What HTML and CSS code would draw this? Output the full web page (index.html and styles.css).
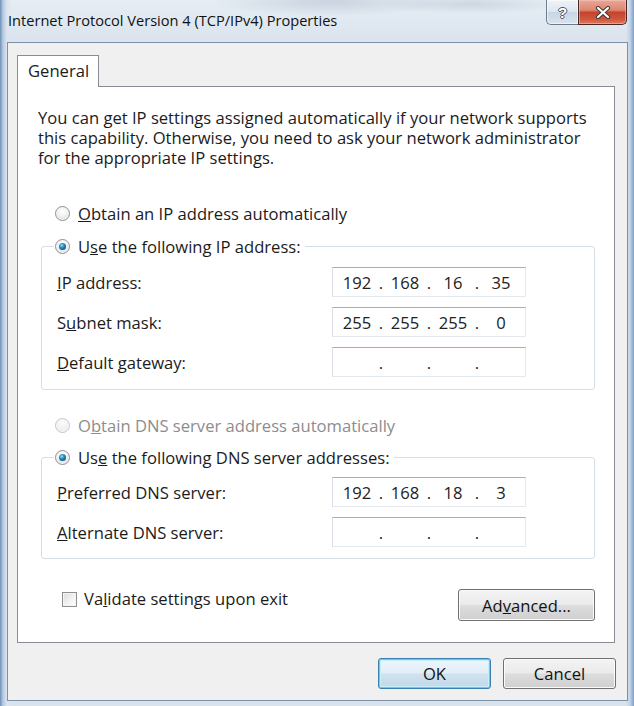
FILE: index.html
```html
<!DOCTYPE html>
<html lang="en">
<head>
<meta charset="utf-8">
<title>Internet Protocol Version 4 (TCP/IPv4) Properties</title>
<link rel="stylesheet" href="styles.css">
</head>
<body>
<div class="window">
  <header class="titlebar">
    <span class="title">Internet Protocol Version 4 (TCP/IPv4) Properties</span>
    <div class="caption">
      <div class="cap-btn help"><span class="help-glyph">?</span></div>
      <div class="cap-btn close">
        <svg width="16" height="13" viewBox="0 0 16 13">
          <path d="M3 2 L13 11 M13 2 L3 11" stroke="#3a3a3a" stroke-width="4.2" stroke-linecap="round" fill="none"/>
          <path d="M3 2 L13 11 M13 2 L3 11" stroke="#ffffff" stroke-width="2.2" stroke-linecap="round" fill="none"/>
        </svg>
      </div>
    </div>
  </header>
  <div class="client">
    <div class="tabstrip"><div class="tab">General</div></div>
    <div class="panel">
      <p class="desc"><span class="line">You can get IP settings assigned automatically if your network supports</span><span class="line">this capability. Otherwise, you need to ask your network administrator</span><span class="line">for the appropriate IP settings.</span></p>

      <div class="option option-top"><span class="radio"></span><span><u>O</u>btain an IP address automatically</span></div>

      <fieldset class="group">
        <legend><span class="option"><span class="radio checked"></span><span>U<u>s</u>e the following IP address:</span></span></legend>
        <div class="fields">
          <span class="label"><u>I</u>P address:</span>
          <div class="ipbox"><span class="seg">192</span><span class="dot">.</span><span class="seg">168</span><span class="dot">.</span><span class="seg">16</span><span class="dot">.</span><span class="seg">35</span></div>
          <span class="label">S<u>u</u>bnet mask:</span>
          <div class="ipbox"><span class="seg">255</span><span class="dot">.</span><span class="seg">255</span><span class="dot">.</span><span class="seg">255</span><span class="dot">.</span><span class="seg">0</span></div>
          <span class="label"><u>D</u>efault gateway:</span>
          <div class="ipbox"><span class="seg"></span><span class="dot">.</span><span class="seg"></span><span class="dot">.</span><span class="seg"></span><span class="dot">.</span><span class="seg"></span></div>
        </div>
      </fieldset>

      <div class="option option-dns disabled"><span class="radio"></span><span>O<u>b</u>tain DNS server address automatically</span></div>

      <fieldset class="group group-dns">
        <legend><span class="option"><span class="radio checked"></span><span>Us<u>e</u> the following DNS server addresses:</span></span></legend>
        <div class="fields">
          <span class="label"><u>P</u>referred DNS server:</span>
          <div class="ipbox"><span class="seg">192</span><span class="dot">.</span><span class="seg">168</span><span class="dot">.</span><span class="seg">18</span><span class="dot">.</span><span class="seg">3</span></div>
          <span class="label"><u>A</u>lternate DNS server:</span>
          <div class="ipbox"><span class="seg"></span><span class="dot">.</span><span class="seg"></span><span class="dot">.</span><span class="seg"></span><span class="dot">.</span><span class="seg"></span></div>
        </div>
      </fieldset>

      <div class="bottom-row">
        <div class="check"><span class="checkbox"></span><span>Va<u>l</u>idate settings upon exit</span></div>
        <button class="btn advanced">Ad<u>v</u>anced...</button>
      </div>
    </div>
    <div class="footer">
      <button class="btn default">OK</button>
      <button class="btn">Cancel</button>
    </div>
  </div>
</div>
</body>
</html>
```

FILE: styles.css
```css
* { box-sizing: border-box; }

html, body {
  margin: 0;
  padding: 0;
}

body {
  width: 634px;
  height: 706px;
  overflow: hidden;
  font-family: "Open Sans", "Noto Sans", sans-serif;
  font-size: 16.6px;
  color: #1b1b1b;
  background:
    linear-gradient(to right, #6d8fb8 0px, #b7cbe0 3px, #dbe5ef 7px, rgba(219,229,239,0) 12px),
    linear-gradient(to left, #7f9fc6 0px, #c1d3e6 4px, rgba(215,226,238,0) 8px),
    linear-gradient(to bottom, #e6edf4 0px, #dbe4ee 40px, #d8e3ee 100%);
}

.window {
  width: 634px;
  height: 706px;
}

/* ---------- title bar ---------- */
.titlebar {
  height: 42px;
  display: flex;
  align-items: flex-start;
  background:
    radial-gradient(ellipse 120px 14px at 330px 2px, rgba(150,165,185,0.35), rgba(150,165,185,0)),
    radial-gradient(ellipse 90px 10px at 470px 4px, rgba(150,165,185,0.3), rgba(150,165,185,0));
}

.title {
  padding-left: 8px;
  font-size: 14.6px;
  line-height: 40px;
  color: #111;
  white-space: nowrap;
}

.caption {
  margin-left: auto;
  margin-right: 7px;
  display: flex;
}

.cap-btn {
  height: 25px;
  display: flex;
  align-items: center;
  justify-content: center;
}

.help {
  width: 32px;
  border: 1px solid #6c7c8e;
  border-top: 0;
  border-right: 0;
  border-radius: 0 0 0 5px;
  background: linear-gradient(to bottom, #eef3f8 0%, #dde6ef 48%, #c9d6e4 52%, #d9e3ee 100%);
  box-shadow: inset 0 0 0 1px rgba(255,255,255,0.55);
}

.help-glyph {
  font-family: "Liberation Sans", sans-serif;
  font-weight: bold;
  font-size: 15px;
  line-height: 1;
  color: #fff;
  text-shadow: -1px 0 #555, 1px 0 #555, 0 -1px #555, 0 1px #555;
}

.close {
  width: 49px;
  border: 1px solid #4b2723;
  border-top: 0;
  border-radius: 0 0 5px 0;
  background: linear-gradient(to bottom, #e9a898 0%, #dc8670 42%, #c6432c 52%, #cf563f 80%, #e07a5d 100%);
  box-shadow: inset 0 0 0 1px rgba(255,210,200,0.45);
}

/* ---------- client area ---------- */
.client {
  margin: 0 6px 0 7px;
  height: 659px;
  border: 1px solid #7f90a4;
  background: #f0f0f0;
  padding: 12px 0 0 9px;
}

.tabstrip {
  display: flex;
  height: 31px;
}

.tab {
  position: relative;
  z-index: 1;
  width: 82px;
  height: 32px;
  border: 1px solid #898c95;
  border-bottom: 0;
  background: #fff;
  padding-left: 10px;
  line-height: 29px;
  color: #1b1b1b;
}

.panel {
  width: 598px;
  height: 557px;
  border: 1px solid #898c95;
  background: #fff;
  padding: 21px 19px 0 20px;
}

.desc {
  margin: 0;
  white-space: nowrap;
}

.desc .line {
  display: block;
  height: 20px;
  line-height: 20px;
}

.option {
  display: flex;
  align-items: center;
  gap: 8px;
  height: 24px;
  white-space: nowrap;
}

.option-top {
  margin: 33px 0 0 17px;
}

.option-dns {
  margin: 23px 0 0 17px;
}

.disabled {
  color: #8d8d8d;
}

.radio {
  flex: none;
  width: 15px;
  height: 15px;
  border-radius: 50%;
  border: 1px solid #8b8f94;
  background: radial-gradient(circle at 50% 35%, #ffffff 0%, #f1f1f1 45%, #d4d4d4 100%);
  box-shadow: inset 0 0 0 1px #f8f8f8;
  position: relative;
}

.disabled .radio {
  border-color: #c4c6c9;
  background: radial-gradient(circle at 50% 35%, #fbfbfb 0%, #f0f0f0 60%, #e4e4e4 100%);
}

.radio.checked::after {
  content: "";
  position: absolute;
  left: 3px;
  top: 3px;
  width: 7px;
  height: 7px;
  border-radius: 50%;
  background: radial-gradient(circle at 40% 35%, #9fe0f5 0%, #2b8fc3 35%, #0d4f7a 80%, #0a3a5c 100%);
}

.group {
  margin: 9px 0 0 3px;
  padding: 0 0 12px 0;
  border: 1px solid #d5dfe5;
  border-radius: 3px;
  min-width: 0;
}

.group legend {
  margin-left: 12px;
  padding: 0 4px 0 1px;
}

.group legend .option {
  color: #1b1b1b;
}

.group-dns {
  margin-top: 8px;
  padding-bottom: 11px;
}

.fields {
  display: grid;
  grid-template-columns: 275px 194px;
  grid-auto-rows: 30px;
  row-gap: 10px;
  align-items: center;
  margin-top: 9px;
  padding-left: 15px;
}

.group-dns .fields {
  margin-top: 8px;
}

.label {
  white-space: nowrap;
}

.ipbox {
  height: 30px;
  display: flex;
  align-items: center;
  padding-left: 3px;
  border: 1px solid #dbdfe6;
  border-top-color: #abadb3;
  border-right-color: #e3e9ef;
  border-bottom-color: #e3e9ef;
  background: #fff;
  color: #222;
}

.seg {
  width: 42px;
  text-align: center;
}

.dot {
  width: 6px;
  text-align: center;
}

.bottom-row {
  display: flex;
  justify-content: space-between;
  align-items: flex-start;
  margin-top: 30px;
}

.check {
  display: flex;
  align-items: center;
  gap: 7px;
  margin-left: 24px;
  line-height: 20px;
  white-space: nowrap;
}

.checkbox {
  width: 15px;
  height: 15px;
  border: 1px solid #8f8f8f;
  background: linear-gradient(135deg, #dcdcdc 0%, #f4f4f4 60%, #ffffff 100%);
  box-shadow: inset 0 0 0 1px #f4f4f4;
}

/* ---------- buttons ---------- */
.btn {
  font-family: "Open Sans", "Noto Sans", sans-serif;
  font-size: 16.6px;
  color: #111;
  height: 32px;
  padding: 0;
  border: 1px solid #707070;
  border-radius: 3px;
  background: linear-gradient(to bottom, #f3f3f3 0%, #ebebeb 48%, #dddddd 52%, #cfcfcf 100%);
  box-shadow: inset 0 0 0 1px #fbfbfb;
}

.advanced {
  width: 137px;
}

.footer {
  display: flex;
  justify-content: flex-end;
  gap: 12px;
  margin-top: 15px;
  padding-right: 11px;
}

.footer .btn {
  width: 113px;
  height: 31px;
}

.btn.default {
  border-color: #3c7fb1;
  background: linear-gradient(to bottom, #eef6fb 0%, #e1eef7 48%, #cfe2ef 52%, #c3d9e9 100%);
  box-shadow: inset 0 0 0 1px #5fd0f0, inset 0 0 0 2px #c8eefb;
}
```
